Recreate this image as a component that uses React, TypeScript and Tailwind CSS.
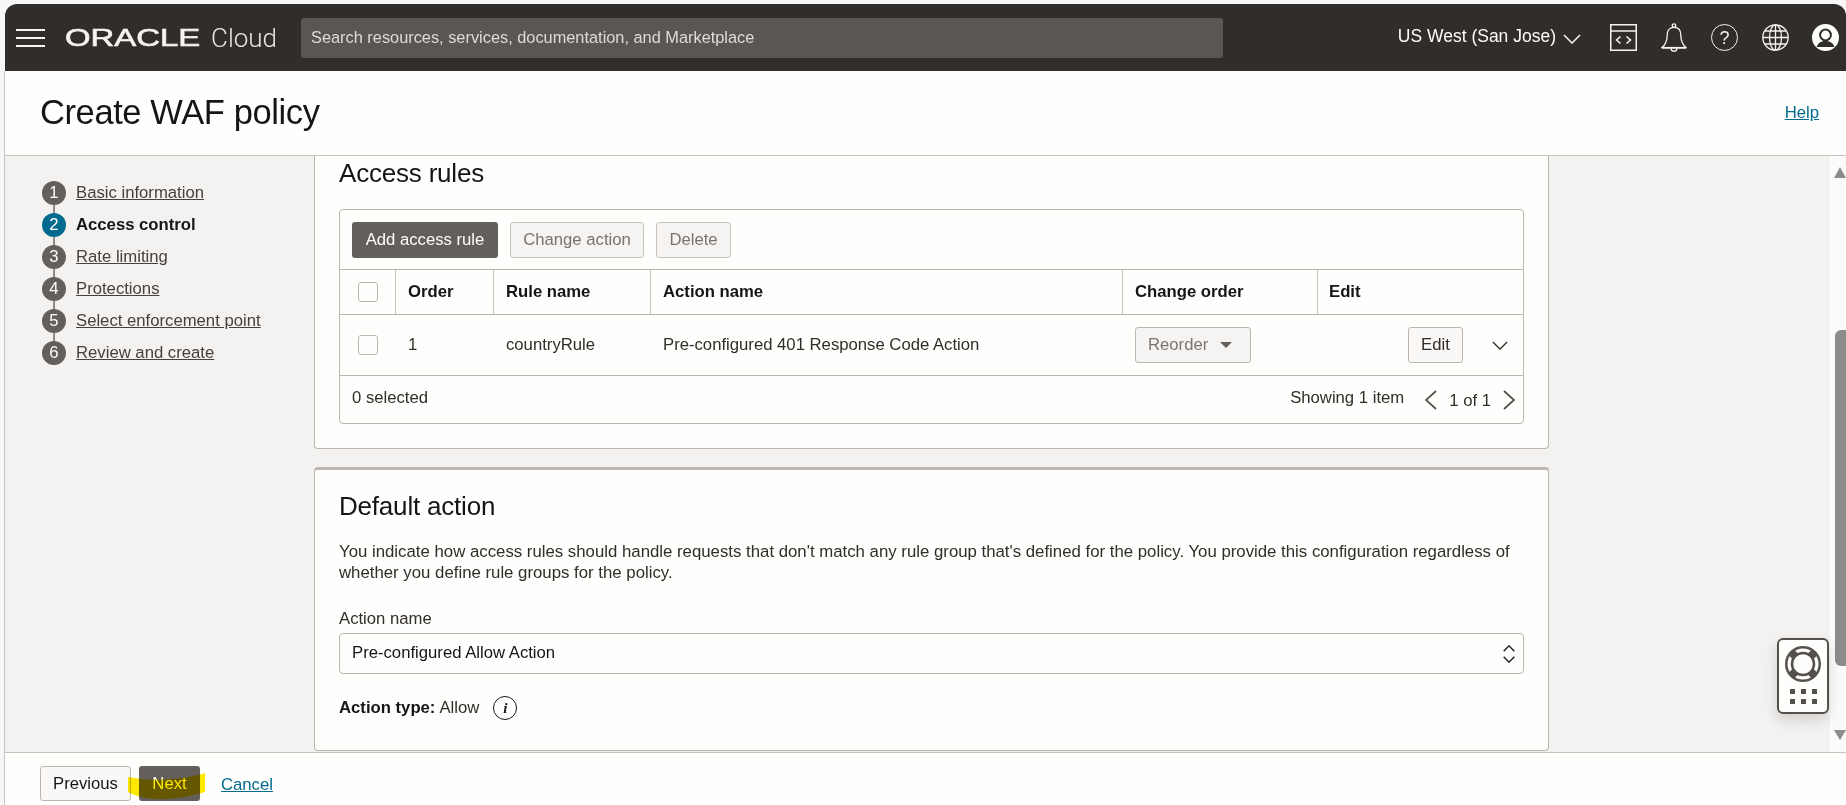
const steps = [
  { label: "Basic information" },
  { label: "Access control", active: true },
  { label: "Rate limiting" },
  { label: "Protections" },
  { label: "Select enforcement point" },
  { label: "Review and create" },
];

function ChevDown({ className = "", width = 1.5 }: { className?: string; width?: number }) {
  return (
    <svg viewBox="0 0 18 10" className={className} fill="none" stroke="currentColor" strokeWidth={width}>
      <path d="M1 1l8 8 8-8" />
    </svg>
  );
}

function ChevUp({ className = "", width = 1.5 }: { className?: string; width?: number }) {
  return (
    <svg viewBox="0 0 18 10" className={className} fill="none" stroke="currentColor" strokeWidth={width}>
      <path d="M1 9l8-8 8 8" />
    </svg>
  );
}

function PageChev({ right }: { right?: boolean }) {
  return (
    <svg viewBox="0 0 12 20" className="w-3 h-5 text-[#55504c]" fill="none" stroke="currentColor" strokeWidth="1.8">
      <path d={right ? "M1 1l10 9-10 9" : "M11 1L1 10l10 9"} />
    </svg>
  );
}

function CodeIcon() {
  return (
    <svg viewBox="0 0 27 27" className="w-[27px] h-[27px]" fill="none" stroke="#f5f4f2" strokeWidth="1.5">
      <rect x="0.75" y="0.75" width="25.5" height="25.5" />
      <path d="M1 7h25" />
      <path d="M10.500 12.500 6.500 16l4 3.500M16.500 12.500l4 3.500-4 3.500" strokeWidth="1.6" />
    </svg>
  );
}

function BellIcon() {
  return (
    <svg viewBox="0 0 26 29" className="w-[26px] h-[29px]" fill="none" stroke="#f5f4f2" strokeWidth="1.3">
      <circle cx="13" cy="2.600" r="1.800" />
      <path d="M13 4.400c-4.600 0-6.800 3.400-6.800 7.600 0 6-1.700 9.600-5.200 12.600h24c-3.500-3-5.200-6.600-5.200-12.600 0-4.200-2.200-7.600-6.800-7.600Z" />
      <path d="M1 24.800h24" strokeWidth="1.800" />
      <path d="M10 25.200a3 3 0 0 0 6 0" />
    </svg>
  );
}

function HelpIcon() {
  return (
    <div className="w-[27px] h-[27px] rounded-full border-[1.5px] border-[#f5f4f2] flex items-center justify-center text-[18px] leading-none text-[#f5f4f2]">
      ?
    </div>
  );
}

function GlobeIcon() {
  return (
    <svg viewBox="0 0 27 27" className="w-[27px] h-[27px]" fill="none" stroke="#f5f4f2" strokeWidth="1.3">
      <circle cx="13.500" cy="13.500" r="12.700" />
      <ellipse cx="13.500" cy="13.500" rx="6" ry="12.700" />
      <path d="M13.500 1v25M1 13.500h25M3 7h21M3 20h21" />
    </svg>
  );
}

function AvatarIcon() {
  return (
    <svg viewBox="0 0 27 27" className="w-[27px] h-[27px]">
      <circle cx="13.500" cy="13.500" r="13.500" fill="#fdfdfc" />
      <circle cx="13.500" cy="11" r="5.400" fill="none" stroke="#312d2a" strokeWidth="2" />
      <path d="M4.600 23c1.200-4 4.500-6 8.900-6s7.700 2 8.900 6" fill="#312d2a" />
    </svg>
  );
}

function HelpWidget() {
  return (
    <div className="absolute right-[17px] bottom-[91px] w-[52px] h-[76px] rounded-[6px] border-2 border-[#55504c] bg-[#fefefd] shadow-[0_6px_14px_rgba(0,0,0,0.14)] flex flex-col items-center pt-[6px]">
      <svg viewBox="0 0 36 36" className="w-[36px] h-[36px]">
        <circle cx="18" cy="18" r="18" fill="#55504c" />
        <circle cx="18" cy="18" r="15.500" fill="#fefefd" />
        <path d="M6 6l8 8M30 6l-8 8M6 30l8-8M30 30l-8-8" stroke="#55504c" strokeWidth="8" />
        <circle cx="18" cy="18" r="11" fill="#fefefd" stroke="#55504c" strokeWidth="2.500" />
      </svg>
      <div className="grid grid-cols-3 gap-x-[6px] gap-y-[5px] mt-[7px]">
        {[0, 1, 2, 3, 4, 5].map((i) => (
          <div key={i} className="w-[5px] h-[5px] bg-[#55504c]" />
        ))}
      </div>
    </div>
  );
}

function Highlight() {
  return (
    <svg viewBox="0 0 77 29" className="absolute left-[128px] top-[773px] w-[77px] h-[29px] mix-blend-multiply pointer-events-none">
      <path d="M0 4C20 8 50 8 77 0v19C50 27 20 30 0 19Z" fill="#ffe900" />
    </svg>
  );
}

export default function App() {
  return (
    <div className="relative h-screen w-full overflow-hidden flex flex-col bg-[#f7f7f7] pt-1 pl-1 text-[16.7px] text-[#312d2a] font-['Liberation_Sans',Arial,sans-serif]">
      <header className="ml-px h-[67px] shrink-0 bg-[#312d2a] rounded-t-[12px] flex items-center text-white">
        <div className="ml-[11px] w-[29px] flex flex-col gap-[6px]">
          <div className="h-0.5 bg-[#f5f4f2]" />
          <div className="h-0.5 bg-[#f5f4f2]" />
          <div className="h-0.5 bg-[#f5f4f2]" />
        </div>
        <div className="ml-5 w-[136px] text-[24px] leading-none [-webkit-text-stroke:0.6px_#f5f4f2] text-[#f5f4f2] origin-left scale-x-[1.37]">ORACLE</div>
        <div className="ml-[10px] text-[26px] leading-none font-light font-['Roboto',sans-serif] text-[#e8e6e3]">Cloud</div>
        <div className="ml-6 w-[922px] h-10 rounded-[3px] bg-[#5b5652] flex items-center pl-[10px] text-[16.35px] text-[#dedbd8]">
          Search resources, services, documentation, and Marketplace
        </div>
        <div className="ml-auto flex items-center">
          <span className="text-[17.5px] text-[#fdfdfc] -mt-[2px]">US West (San Jose)</span>
          <ChevDown className="ml-[7px] mt-[3px] w-[18px] h-[10px] text-[#f5f4f2]" />
          <div className="ml-[29px]"><CodeIcon /></div>
          <div className="ml-6"><BellIcon /></div>
          <div className="ml-6"><HelpIcon /></div>
          <div className="ml-6"><GlobeIcon /></div>
          <div className="ml-[23px] mr-[7px]"><AvatarIcon /></div>
        </div>
      </header>

      <div className="h-[85px] shrink-0 bg-[#fefefd] border-l border-b border-[#c8c3be] flex items-center justify-between pl-[35px] pr-[27px]">
        <h1 className="text-[34.5px] tracking-[-0.4px] leading-none text-[#161513] -mt-px">Create WAF policy</h1>
        <a className="text-[#006b8f] underline">Help</a>
      </div>

      <div className="flex-1 min-h-0 flex bg-[#f3f2f1] border-l border-[#c8c3be]">
        <nav className="w-[309px] shrink-0 pt-[25px] pl-[37px]">
          {steps.map((s, i) => (
            <div key={s.label} className="flex gap-[10px]">
              <div className="flex flex-col items-center">
                <div className={`w-6 h-6 rounded-full flex items-center justify-center text-[#fdfdfc] ${s.active ? "bg-[#006b8f]" : "bg-[#655f5c]"}`}>
                  {i + 1}
                </div>
                {i < steps.length - 1 && <div className="w-0.5 h-2 bg-[#8f8a85]" />}
              </div>
              {s.active ? (
                <span className="leading-6 font-bold text-[#161513]">{s.label}</span>
              ) : (
                <a className="leading-6 underline text-[#46413d]">{s.label}</a>
              )}
            </div>
          ))}
        </nav>

        <main className="w-[1235px] shrink-0 overflow-hidden">
          <section className="h-[293px] bg-[#fefefd] border-x border-b border-[#bcb6b1] rounded-b-[4px] px-6">
            <h2 className="text-[26px] tracking-[-0.2px] leading-[34px] text-[#161513]">Access rules</h2>
            <div className="mt-[19px] border border-[#bcb6b1] rounded-[4px]">
              <div className="h-[60px] flex items-center gap-3 px-3 border-b border-[#bcb6b1]">
                <button className="h-9 w-[146px] rounded-[3px] bg-[#655f5c] text-[#fdfdfc]">Add access rule</button>
                <button className="h-9 w-[134px] rounded-[3px] border border-[#c8c3be] bg-[#f5f4f2] text-[#7a7470]">Change action</button>
                <button className="h-9 w-[75px] rounded-[3px] border border-[#c8c3be] bg-[#f5f4f2] text-[#7a7470]">Delete</button>
              </div>
              <div className="h-[45px] flex border-b border-[#bcb6b1] font-bold text-[#161513]">
                <div className="w-[56px] border-r border-[#c8c3be] pl-[18px] flex items-center">
                  <div className="w-5 h-5 rounded-[3px] border border-[#bcb6b1]" />
                </div>
                <div className="w-[98px] border-r border-[#c8c3be] pl-3 flex items-center">Order</div>
                <div className="w-[157px] border-r border-[#c8c3be] pl-3 flex items-center">Rule name</div>
                <div className="w-[472px] border-r border-[#c8c3be] pl-3 flex items-center">Action name</div>
                <div className="w-[195px] border-r border-[#c8c3be] pl-3 flex items-center">Change order</div>
                <div className="flex-1 pl-[11px] flex items-center">Edit</div>
              </div>
              <div className="h-[61px] flex items-center border-b border-[#bcb6b1]">
                <div className="w-[56px] pl-[18px]">
                  <div className="w-5 h-5 rounded-[3px] border border-[#bcb6b1]" />
                </div>
                <div className="w-[98px] pl-3">1</div>
                <div className="w-[157px] pl-3">countryRule</div>
                <div className="w-[472px] pl-3">Pre-configured 401 Response Code Action</div>
                <div className="w-[195px] pl-3">
                  <button className="h-9 w-[116px] rounded-[3px] border border-[#bcb6b1] bg-[#f5f4f2] text-[#7a7470] flex items-center pl-3">
                    Reorder
                    <span className="ml-3 w-0 h-0 border-x-[6px] border-x-transparent border-t-[6px] border-t-[#655f5c]" />
                  </button>
                </div>
                <div className="flex-1 flex items-center justify-end pr-[15px]">
                  <button className="h-9 w-[55px] rounded-[3px] border border-[#bcb6b1] bg-[#f9f8f7] text-[#312d2a]">Edit</button>
                  <ChevDown className="ml-[29px] w-4 h-[9px] text-[#312d2a]" width={1.4} />
                </div>
              </div>
              <div className="h-[47px] flex items-center pl-3 pr-[8px]">
                <span className="-mt-1">0 selected</span>
                <span className="ml-auto -mt-1">Showing 1 item</span>
                <div className="ml-[21px]"><PageChev /></div>
                <span className="ml-3 mt-[2px]">1 of 1</span>
                <div className="ml-3"><PageChev right /></div>
              </div>
            </div>
          </section>

          <section className="mt-[18px] h-[284px] bg-[#fefefd] border-x border-b border-t-[3px] border-[#bcb6b1] rounded-[4px] px-6 pt-[20px]">
            <h2 className="text-[26px] tracking-[-0.2px] leading-[32px] text-[#161513]">Default action</h2>
            <p className="mt-[19px] leading-[21px] text-[16.8px]">
              You indicate how access rules should handle requests that don't match any rule group that's defined for the policy. You provide this configuration regardless of whether you define rule groups for the policy.
            </p>
            <div className="mt-[25px] leading-[21px]">Action name</div>
            <div className="mt-[4px] h-[41px] rounded-[4px] border border-[#bcb6b1] flex items-center justify-between pl-3 pr-[8px] text-[#161513]">
              <span className="-mt-0.5">Pre-configured Allow Action</span>
              <div className="flex flex-col gap-[4px]">
                <ChevUp className="w-[12px] h-[7px] text-[#161513]" width={2} />
                <ChevDown className="w-[12px] h-[7px] text-[#161513]" width={2} />
              </div>
            </div>
            <div className="mt-[22px] flex items-center h-6">
              <b className="text-[#161513]">Action type:</b>
              <span className="ml-1">Allow</span>
              <span className="ml-[14px] w-6 h-6 rounded-full border-[1.5px] border-[#161513] flex items-center justify-center italic font-bold font-['Liberation_Serif',serif] text-[15px] leading-none text-[#161513]">
                i
              </span>
            </div>
          </section>
        </main>

        <div className="flex-1" />

        <div className="w-4 shrink-0 bg-[#fbfbfb] flex flex-col items-end pt-[11px]">
          <div className="w-0 h-0 border-x-[6px] border-x-transparent border-b-[11px] border-b-[#8c8c8c]" />
          <div className="mt-[152px] w-[11px] h-[336px] rounded-l-[6px] bg-[#8c8c8c]" />
          <div className="mt-[64px] w-0 h-0 border-x-[6px] border-x-transparent border-t-[10px] border-t-[#8c8c8c]" />
        </div>
      </div>

      <footer className="h-[53px] shrink-0 bg-[#fefefd] border-l border-t border-[#c8c3be] flex items-start pt-[13px] pl-[35px]">
        <button className="h-[35px] w-[91px] rounded-[3px] border border-[#bcb6b1] bg-[#f9f8f7] text-[#161513]">Previous</button>
        <button className="ml-2 h-[35px] w-[61px] rounded-[3px] bg-[#655f5c] text-[#fdfdfc]">Next</button>
        <a className="ml-[21px] mt-[6px] text-[#006b8f] underline">Cancel</a>
      </footer>

      <Highlight />
      <HelpWidget />
    </div>
  );
}
